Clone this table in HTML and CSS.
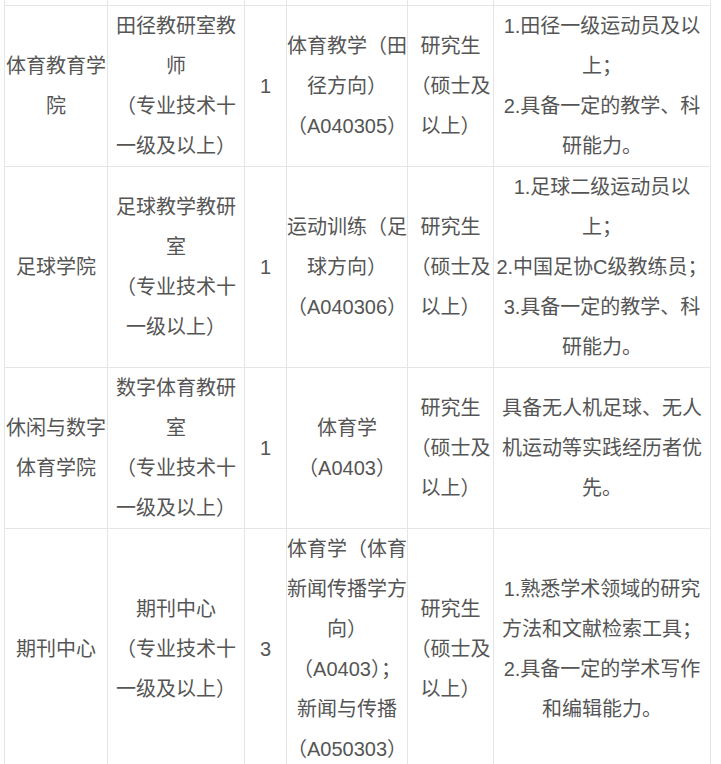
FILE: index.html
```html
<!DOCTYPE html>
<html lang="zh-CN">
<head>
<meta charset="utf-8">
<title>岗位表</title>
<link rel="stylesheet" href="styles.css">
</head>
<body>
<div class="page">
<table class="jobs">
<colgroup>
<col class="c-unit"><col class="c-post"><col class="c-num"><col class="c-major"><col class="c-edu"><col class="c-req">
</colgroup>
<tbody>
<tr class="cut"><td></td><td></td><td></td><td></td><td></td><td></td></tr>
<tr>
<td>体育教育学院</td>
<td>田径教研室教师<br>（专业技术十一级及以上）</td>
<td>1</td>
<td>体育教学（田径方向）（A040305）</td>
<td>研究生<br>（硕士及以上）</td>
<td>1.田径一级运动员及以上；<br>2.具备一定的教学、科研能力。</td>
</tr>
<tr>
<td>足球学院</td>
<td>足球教学教研室<br>（专业技术十一级以上）</td>
<td>1</td>
<td>运动训练（足球方向）（A040306）</td>
<td>研究生<br>（硕士及以上）</td>
<td>1.足球二级运动员以上；<br>2.中国足协C级教练员；<br>3.具备一定的教学、科研能力。</td>
</tr>
<tr>
<td>休闲与数字体育学院</td>
<td>数字体育教研室<br>（专业技术十一级及以上）</td>
<td>1</td>
<td>体育学<br>（A0403）</td>
<td>研究生<br>（硕士及以上）</td>
<td>具备无人机足球、无人机运动等实践经历者优先。</td>
</tr>
<tr>
<td>期刊中心</td>
<td>期刊中心<br>（专业技术十一级及以上）</td>
<td>3</td>
<td>体育学（体育新闻传播学方向）<br>（A0403）；<br>新闻与传播<br>（A050303）</td>
<td>研究生<br>（硕士及以上）</td>
<td>1.熟悉学术领域的研究方法和文献检索工具；<br>2.具备一定的学术写作和编辑能力。</td>
</tr>
</tbody>
</table>
</div>
</body>
</html>
```

FILE: styles.css
```css
html, body {
  margin: 0;
  padding: 0;
  background: #ffffff;
}

.page {
  padding-left: 4px;
}

.jobs {
  border-collapse: collapse;
  table-layout: fixed;
  width: 706px;
  font-family: "Liberation Sans", "Noto Sans CJK SC", sans-serif;
  font-size: 20px;
  line-height: 40px;
  color: #555555;
}

.c-unit { width: 103px; }
.c-post { width: 137px; }
.c-num { width: 42px; }
.c-major { width: 121px; }
.c-edu { width: 86px; }
.c-req { width: 217px; }

.jobs td {
  border: 1px solid #e5e5e5;
  padding: 0;
  text-align: center;
  vertical-align: middle;
}

.jobs tr.cut td {
  border-top: none;
  height: 5px;
  line-height: 5px;
}
```
